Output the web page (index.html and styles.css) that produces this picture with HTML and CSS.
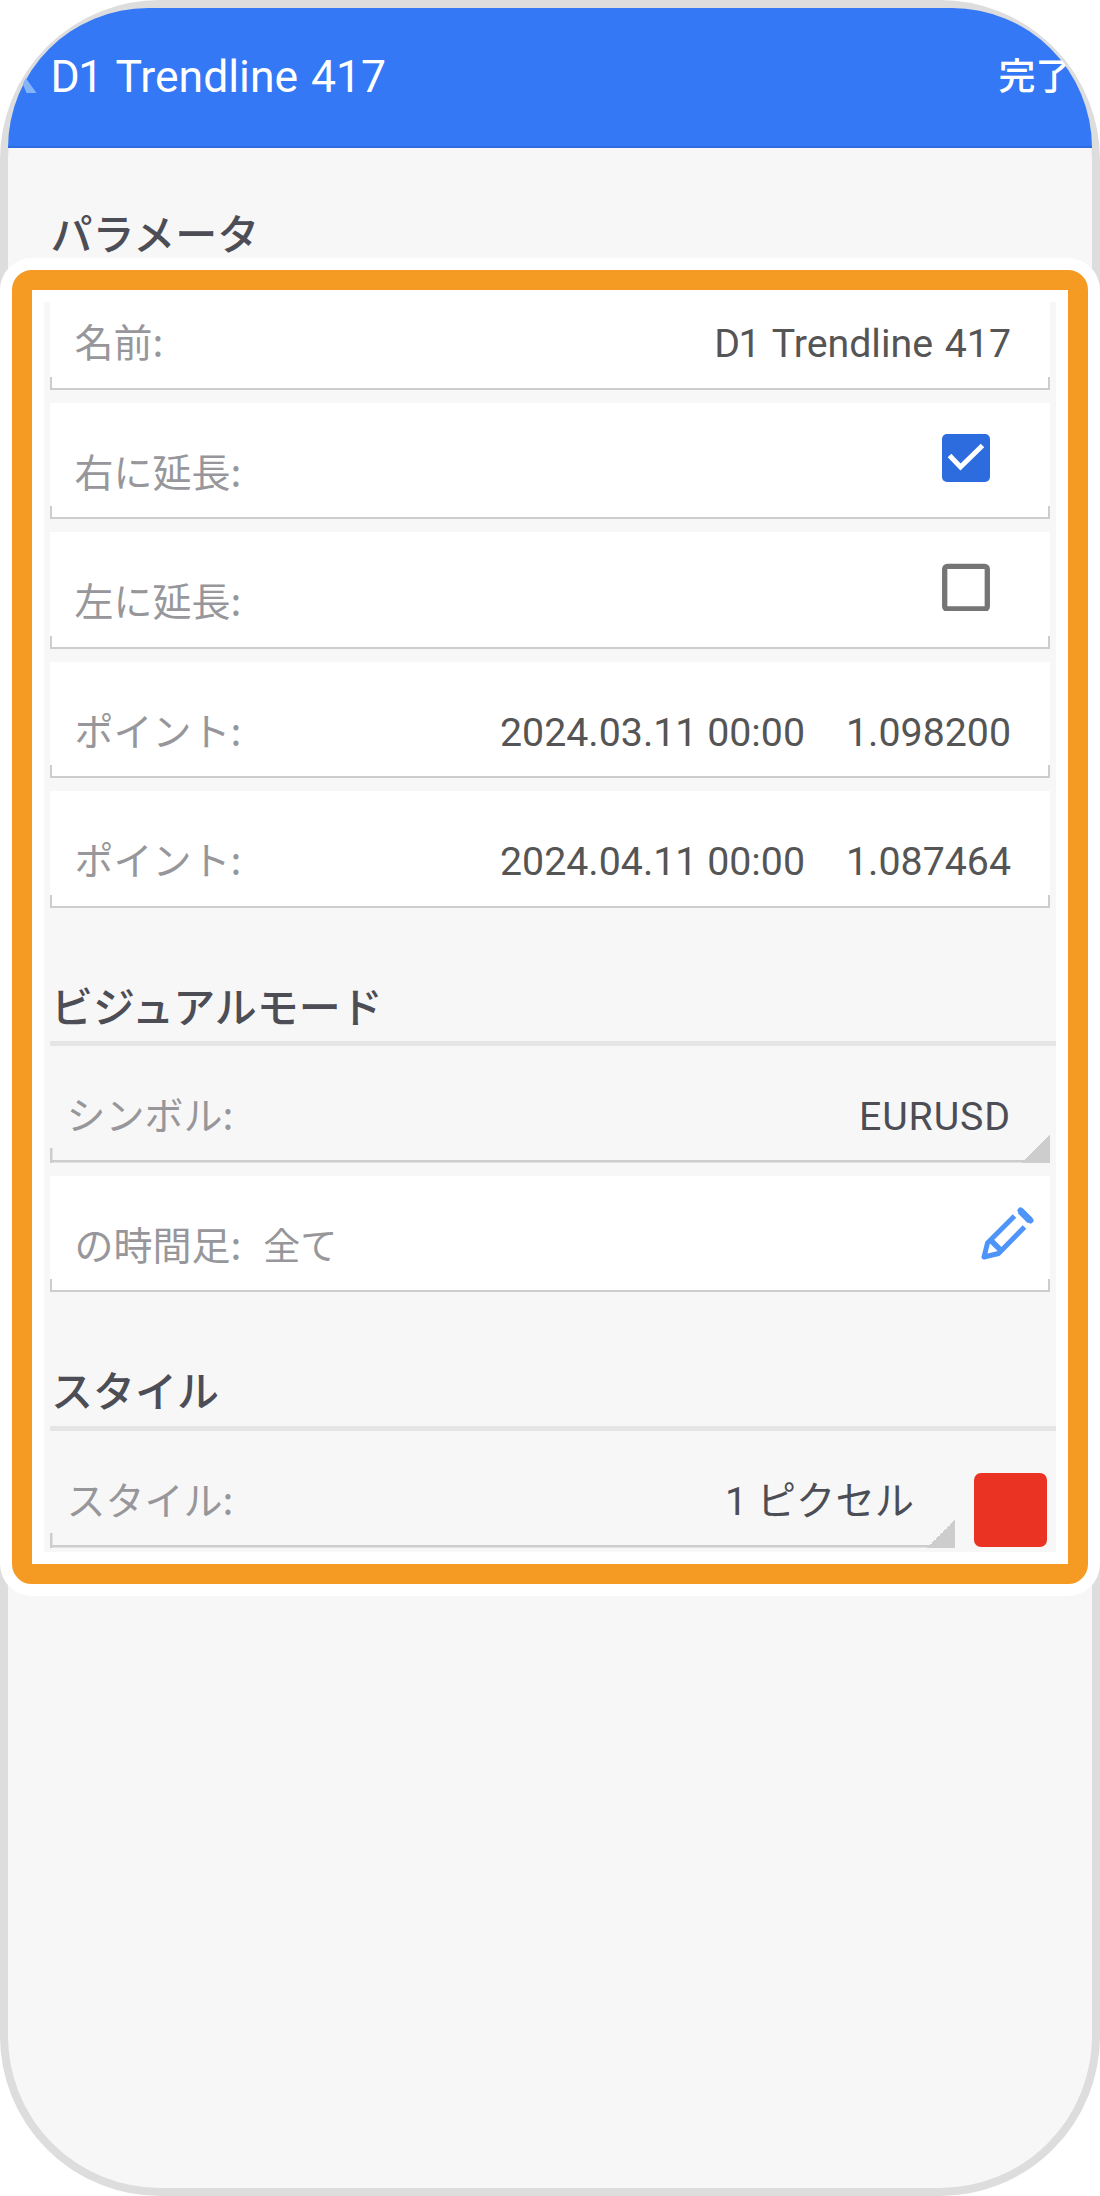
FILE: index.html
```html
<!DOCTYPE html>
<html lang="ja">
<head>
<meta charset="utf-8">
<title>D1 Trendline 417</title>
<link rel="stylesheet" href="styles.css">
</head>
<body>
<div class="phone">
  <header class="bar">
    <svg class="back" viewBox="0 0 22 36"><path d="M12 3 5 19 16.500 35H6.500L0 19 5 3Z"/></svg>
    <h1 class="title"><span class="tight">D</span>1 Trendline 417</h1>
    <span class="done">完了</span>
  </header>
  <h2 class="heading heading-top">パラメータ</h2>
  <div class="halo">
    <main class="panel">
      <div class="content">
        <div class="row row-first"><span class="label">名前:</span><span class="value name"><span class="tight">D</span>1 Trendline 417</span></div>
        <div class="row"><span class="label">右に延長:</span>
          <svg class="check" viewBox="0 0 48 48"><rect width="48" height="48" rx="5" fill="#2d6cdf"/><path d="M7.500 21.500 18.500 33 40.500 11.500" fill="none" stroke="#fff" stroke-width="5"/></svg>
        </div>
        <div class="row"><span class="label">左に延長:</span>
          <svg class="check" viewBox="0 0 48 48"><rect x="2.700" y="3.400" width="42.600" height="42.600" rx="2.500" fill="none" stroke="#757575" stroke-width="5.300"/></svg>
        </div>
        <div class="row"><span class="label">ポイント:</span><span class="value">2024.03.11 00:00</span><span class="value price">1.098200</span></div>
        <div class="row"><span class="label">ポイント:</span><span class="value">2024.04.11 00:00</span><span class="value price">1.087464</span></div>
        <h2 class="heading">ビジュアルモード</h2>
        <div class="row picker"><span class="label">シンボル:</span><span class="value symbol">EURUSD</span></div>
        <div class="row"><span class="label">の時間足:</span><span class="label all">全て</span>
          <svg class="pencil" viewBox="0 0 53 53" fill="none" stroke="#4f95f9" stroke-width="5"><path d="M33.500 9 6.500 36 3 50 17.500 46.500 43.500 20" stroke-linejoin="round"/><path d="M9 32.500 20.500 44" stroke-width="5.500"/><path d="M39.300 3.700 49.300 13.700" stroke-width="7"/><path d="M39.500 3.500 49.500 13.500" stroke-width="6" stroke-linecap="round"/></svg>
        </div>
        <h2 class="heading heading-style">スタイル</h2>
        <div class="style-line">
          <div class="row picker"><span class="label">スタイル:</span><span class="value">1 ピクセル</span></div>
          <span class="swatch"></span>
        </div>
      </div>
    </main>
  </div>
</div>
</body>
</html>
```
FILE: styles.css
```css
* { box-sizing: border-box; }
body {
  margin: 0;
  background: #fff;
  font-family: Roboto, "Noto Sans CJK JP", sans-serif;
  font-size: 39.3px;
  color: #555;
}
.phone {
  height: 2196px;
  border: 8px solid #ddd;
  border-radius: 160px;
  background: #f7f7f7;
}
.bar {
  height: 140px;
  padding: 0 0 2px 12px;
  display: flex;
  align-items: center;
  background: #3478f6;
  border-bottom: 2px solid #2d6cdf;
  border-radius: 152px 152px 0 0 / 152px 152px 0 0;
  color: #fff;
  overflow: hidden;
}
.back { width: 22px; height: 36px; margin-right: 8.500px; fill: #86b4fb; }
.title { flex: 1; margin: 0; padding-top: 1px; font-size: 44.500px; font-weight: 400; word-spacing: 2px; }
.tight { letter-spacing: -1.500px; }
.done {
  width: 93.500px;
  font-family: "Noto Sans CJK JP", sans-serif;
  font-size: 37px;
  font-weight: 500;
  line-height: 56px;
  padding-bottom: 5px;
}
.heading {
  margin: 0;
  height: 125.400px;
  padding: 54px 0 0 1px;
  font-family: "Noto Sans CJK JP", sans-serif;
  font-size: 42px;
  line-height: 60px;
  font-weight: 500;
  color: #4d4d55;
  border-bottom: 5px solid #e5e5e5;
}
.heading-top { height: 110px; padding: 53.500px 0 0 42.500px; border: 0; }
.heading-style { height: 126.200px; }
.halo {
  margin: 0 -8px;
  padding: 12px;
  background: #fff;
  border-radius: 32px;
}
.panel {
  padding: 12px;
  background: #fff;
  border: 20px solid #f59b23;
  border-radius: 20px;
}
.content {
  height: 1250px;
  padding-left: 6px;
  background: #f7f7f7;
}
.row {
  width: 1000px;
  height: 116.400px;
  margin-bottom: 13px;
  padding: 39px 39px 0 24.500px;
  display: flex;
  align-items: baseline;
  line-height: 56px;
  white-space: nowrap;
  background:
    linear-gradient(#cdcdcd, #cdcdcd) 0 100% / 100% 2px no-repeat,
    linear-gradient(#cdcdcd, #cdcdcd) 0 100% / 2px 13px no-repeat,
    linear-gradient(#cdcdcd, #cdcdcd) 100% 100% / 2px 13px no-repeat,
    #fff;
}
.row-first { height: 88px; padding-top: 10px; }
.label {
  font-family: "Noto Sans CJK JP", sans-serif;
  font-size: 39px;
  color: #97979b;
}
.all { margin-left: 22px; font-size: 37px; }
.value { margin-left: auto; }
.name { word-spacing: 2px; }
.symbol { letter-spacing: .9px; }
.price { margin-left: 41px; }
.check { width: 48px; height: 48px; align-self: flex-start; margin: -8px 21.500px 0 auto; }
.pencil { width: 53px; height: 53px; align-self: flex-start; margin: -7.500px -23px 0 auto; }
.picker {
  height: 116.700px;
  padding-left: 16.500px;
  background:
    linear-gradient(135deg, transparent 50%, #cdcdcd 50%) 100% 100% / 28px 28px no-repeat,
    linear-gradient(#cdcdcd, #cdcdcd) 0 100% / 100% 2.500px no-repeat,
    linear-gradient(#cdcdcd, #cdcdcd) 0 100% / 2.500px 15px no-repeat;
}
.picker .value { color: #4d4d55; }
.style-line { display: flex; gap: 19px; width: 997px; align-items: flex-start; }
.style-line .row { flex: 1; padding-right: 40.500px; padding-top: 38.500px; }
.swatch { width: 73.500px; height: 74px; margin-top: 41.500px; background: #eb3323; border-radius: 7px; }
```
